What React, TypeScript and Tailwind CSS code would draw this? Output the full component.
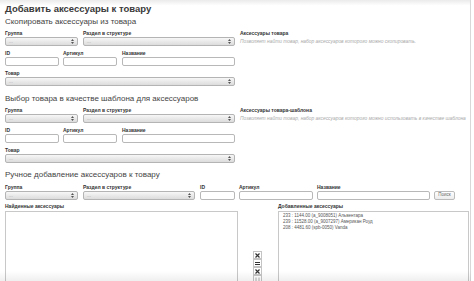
import React from 'react';

const font = { fontFamily: '"Liberation Sans", Arial, sans-serif' };

function Label({ children }: { children: React.ReactNode }) {
  return <div className="h-[8px] text-[5px] leading-[8px] font-bold text-[#333] whitespace-nowrap">{children}</div>;
}

function Select({ w }: { w: string }) {
  return (
    <div className={`${w} h-[9px] flex items-center justify-between border border-[#b4b4b4] rounded-[2px] bg-linear-to-b from-[#f7f7f7] to-[#dcdcdc] px-[3px]`}>
      <span className="text-[4px] leading-none text-[#999]">---</span>
      <svg width="3" height="5" viewBox="0 0 3 5">
        <path d="M0 2 L1.5 0 L3 2 Z M0 3 L1.5 5 L3 3 Z" fill="#555" />
      </svg>
    </div>
  );
}

function Input({ w }: { w: string }) {
  return <div className={`${w} h-[9px] border border-[#b8b8b8] rounded-[2px] bg-white`} />;
}

function Field({ label, children }: { label: string; children: React.ReactNode }) {
  return (
    <div className="flex flex-col">
      <Label>{label}</Label>
      {children}
    </div>
  );
}

function CopyBlock({ title, hintLabel, hint }: { title: string; hintLabel: string; hint: string }) {
  return (
    <div>
      <h2 className="h-[11px] text-[8px] leading-[11px] text-[#444] whitespace-nowrap">{title}</h2>
      <div className="flex gap-[5px] mt-[2px]">
        <div className="w-[230px] flex flex-col gap-[3px]">
          <div className="flex gap-[5px]">
            <Field label="Группа"><Select w="w-[73px]" /></Field>
            <Field label="Раздел в структуре"><Select w="w-[152px]" /></Field>
          </div>
          <div className="flex gap-[4px]">
            <Field label="ID"><Input w="w-[54px]" /></Field>
            <Field label="Артикул"><Input w="w-[54px]" /></Field>
            <div className="ml-[1px]"><Field label="Название"><Input w="w-[113px]" /></Field></div>
          </div>
          <Field label="Товар"><Select w="w-[230px]" /></Field>
        </div>
        <div className="flex flex-col w-[226px]">
          <Label>{hintLabel}</Label>
          <div className="h-[9px] text-[4.9px] leading-[9px] italic text-[#aaa] whitespace-nowrap">{hint}</div>
        </div>
      </div>
    </div>
  );
}

function MoveBtn({ children }: { children: React.ReactNode }) {
  return (
    <div className="w-[9px] h-[8px] border border-[#c4c4c4] bg-white flex items-center justify-center">{children}</div>
  );
}

export default function App() {
  return (
    <div className="w-[474px] h-[281px] overflow-hidden bg-white relative" style={font}>
      <div className="w-[471px] h-full border-r border-[#d8d8d8] bg-linear-to-b from-[#ebebeb] from-0% to-white to-2% pl-[5px]">
        <h1 className="pt-[3px] h-[15px] text-[9.5px] leading-[12px] font-bold text-[#3a3a3a] whitespace-nowrap">
          Добавить аксессуары к товару
        </h1>

        <div className="mt-[1px]">
          <CopyBlock
            title="Скопировать аксессуары из товара"
            hintLabel="Аксессуары товара"
            hint="Позволяет найти товар, набор аксессуаров которого можно скопировать."
          />
        </div>

        <div className="mt-[7px]">
          <CopyBlock
            title="Выбор товара в качестве шаблона для аксессуаров"
            hintLabel="Аксессуары товара-шаблона"
            hint="Позволяет найти товар, набор аксессуаров которого можно использовать в качестве шаблона"
          />
        </div>

        <h2 className="mt-[6px] h-[11px] text-[8px] leading-[11px] text-[#444] whitespace-nowrap">
          Ручное добавление аксессуаров к товару
        </h2>
        <div className="mt-[3px] flex items-end">
          <Field label="Группа"><Select w="w-[73px]" /></Field>
          <div className="ml-[5px]"><Field label="Раздел в структуре"><Select w="w-[112px]" /></Field></div>
          <div className="ml-[5px]"><Field label="ID"><Input w="w-[35px]" /></Field></div>
          <div className="ml-[4px]"><Field label="Артикул"><Input w="w-[74px]" /></Field></div>
          <div className="ml-[4px]"><Field label="Название"><Input w="w-[113px]" /></Field></div>
          <div className="ml-[4px] w-[21px] h-[9px] border border-[#bbb] rounded-[2px] bg-linear-to-b from-white to-[#ececec] flex items-center justify-center text-[4.5px] text-[#666]">
            Поиск
          </div>
        </div>

        <div className="mt-[2px] flex">
          <div className="flex flex-col">
            <Label>Найденные аксессуары</Label>
            <div className="mt-[1px] w-[233px] h-[80px] border border-[#c8c8c8] bg-white" />
          </div>
          <div className="w-[40px] pl-[15px] pt-[49px] flex flex-col">
            <MoveBtn>
              <svg width="5" height="5" viewBox="0 0 5 5"><path d="M0.5 0.5 L4.5 4.5 M4.5 0.5 L0.5 4.5" stroke="#333" strokeWidth="1.2" /></svg>
            </MoveBtn>
            <MoveBtn>
              <svg width="5" height="5" viewBox="0 0 5 5"><path d="M0 1.5 H5 M0 3.5 H5" stroke="#333" strokeWidth="1" /></svg>
            </MoveBtn>
            <MoveBtn>
              <svg width="5" height="5" viewBox="0 0 5 5"><path d="M0.5 0.5 L4.5 4.5 M4.5 0.5 L0.5 4.5" stroke="#333" strokeWidth="1.2" /></svg>
            </MoveBtn>
            <MoveBtn>
              <svg width="5" height="5" viewBox="0 0 5 5"><path d="M1 0.5 V4.5 M4 0.5 V4.5" stroke="#999" strokeWidth="0.8" /></svg>
            </MoveBtn>
          </div>
          <div className="flex flex-col">
            <Label>Добавленные аксессуары</Label>
            <div className="mt-[1px] w-[191px] h-[80px] border border-[#c8c8c8] bg-white pl-[4px] pt-[1px] text-[4.5px] leading-[6px] text-[#555] whitespace-nowrap">
              <div>233 : 1144.00 (a_9008051) Альвентара</div>
              <div>239 : 11528.00 (a_9007297) Американ Роуд</div>
              <div>208 : 4481.60 (spb-0050) Vanda</div>
            </div>
          </div>
        </div>
      </div>
      <div className="pointer-events-none absolute left-0 bottom-0 w-[471px] h-[10px] bg-linear-to-b from-transparent to-[#00000010]" />
    </div>
  );
}
